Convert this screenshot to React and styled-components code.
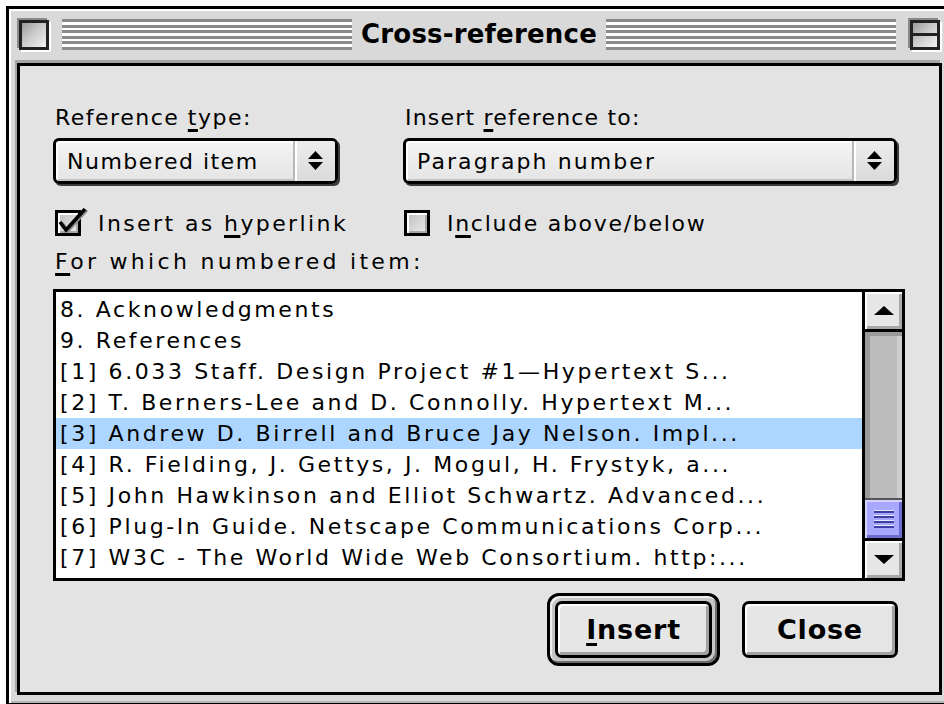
import React from "react";
import styled, { createGlobalStyle } from "styled-components";

const Global = createGlobalStyle`
  html, body { margin: 0; padding: 0; background: #fff; overflow: hidden; }
  body { font-family: "DejaVu Sans", Verdana, sans-serif; color: #000; }
  #root { width: 944px; height: 704px; overflow: hidden; }
`;

const Window = styled.div`
  box-sizing: border-box;
  margin: 6px 0 0 6px;
  width: 947px;
  height: 700px;
  border: 3px solid #000;
  background: #d9d9d9;
  box-shadow: inset 2px 2px 0 #fff, inset -2px -2px 0 #b4b4b4;
  padding: 0 8px 8px 8px;
  display: flex;
  flex-direction: column;
`;

const TitleBar = styled.div`
  height: 51px;
  display: flex;
  align-items: center;
  padding: 0 2px;
`;

const FrameBox = styled.div`
  position: relative;
  box-sizing: border-box;
  width: 30px;
  height: 30px;
  flex: none;
  border: 3px solid #222;
  background: linear-gradient(135deg, #9c9c9c 0%, #c9c9c9 45%, #f3f3f3 100%);
  box-shadow: -2px -2px 0 #8a8a8a, 2px 2px 0 #fff;
  display: flex;
  flex-direction: column;
  justify-content: center;
`;

const ShadeBar = styled.div`
  height: 3px;
  background: #222;
`;

const Stripes = styled.div`
  flex: 1;
  height: 31px;
  margin: ${(p) => (p.$side === "left" ? "0 0 0 13px" : "0 14px 0 0")};
  background: repeating-linear-gradient(
    to bottom,
    #8a8a8a 0 3px,
    #fff 3px 5.6px
  );
`;

const Title = styled.div`
  padding: 0 9px;
  font-weight: bold;
  font-size: 26px;
  letter-spacing: 0.2px;
  line-height: 31px;
  white-space: nowrap;
`;

const Body = styled.div`
  flex: 1;
  margin-top: 3px;
  border: 3px solid #000;
  box-shadow: -2px -3px 0 #a6a6a6;
  background: #e3e3e3;
  padding: 39px 34px 0 33px;
  display: flex;
  flex-direction: column;
`;

const Fields = styled.div`
  display: grid;
  grid-template-columns: 285px 494px;
  column-gap: 65px;
  align-items: center;
  margin-top: ${(p) => p.$top || 0}px;
`;

const Field = styled.div`
  display: flex;
  flex-direction: column;
`;

const Label = styled.div`
  font-size: 22px;
  line-height: 26px;
  letter-spacing: ${(p) => p.$spacing ?? 1.5}px;
  padding-left: 2px;
  white-space: nowrap;
  margin-top: ${(p) => p.$top || 0}px;
`;

const Key = styled.span`
  text-decoration: underline;
  text-decoration-thickness: 3px;
  text-underline-offset: 4px;
`;

const Popup = styled.div`
  box-sizing: border-box;
  margin-top: 7px;
  height: 46px;
  display: flex;
  border: 3px solid #000;
  border-radius: 6px;
  background: linear-gradient(#f4f4f4, #e4e4e4);
  box-shadow: 2px 2px 0 #3a3a3a, inset 2px 2px 0 #fff, inset -2px -2px 0 #c2c2c2;
  overflow: hidden;
`;

const PopupText = styled.div`
  flex: 1;
  padding-left: 11px;
  font-size: 22px;
  letter-spacing: ${(p) => p.$spacing ?? 1.5}px;
  line-height: 42px;
  white-space: nowrap;
`;

const PopupArrows = styled.div`
  width: 40px;
  flex: none;
  display: flex;
  align-items: center;
  justify-content: center;
  border-left: 2px solid #b8b8b8;
  box-shadow: inset 2px 0 0 #fff;
  background: linear-gradient(#ececec, #dadada);
`;

const CheckRow = styled.div`
  display: flex;
  align-items: center;
  height: 30px;
  padding-left: ${(p) => p.$indent}px;
`;

const CheckBox = styled.div`
  position: relative;
  box-sizing: border-box;
  width: 26px;
  height: 26px;
  flex: none;
  border: 3px solid #000;
  background: linear-gradient(135deg, #bcbcbc, #eeeeee);
  box-shadow: inset 2px 2px 0 #fff, inset -2px -2px 0 #a8a8a8;
`;

const CheckMark = styled.svg`
  position: absolute;
  left: -3px;
  top: -4px;
  overflow: visible;
`;

const CheckLabel = styled.span`
  margin-left: 17px;
  font-size: 22px;
  letter-spacing: ${(p) => p.$spacing ?? 1.5}px;
  white-space: nowrap;
`;

const ListBox = styled.div`
  box-sizing: border-box;
  margin-top: 14px;
  height: 292px;
  width: 852px;
  display: flex;
  border: 3px solid #000;
  background: #fff;
`;

const Rows = styled.div`
  flex: 1;
  padding-top: 2px;
  overflow: hidden;
`;

const Row = styled.div`
  height: 31px;
  line-height: 32px;
  padding-left: 4px;
  font-size: 22px;
  letter-spacing: 2.6px;
  white-space: nowrap;
  background: ${(p) => (p.$selected ? "#acd5ff" : "transparent")};
`;

const ScrollBar = styled.div`
  width: 37px;
  flex: none;
  border-left: 3px solid #000;
  display: flex;
  flex-direction: column;
`;

const ArrowButton = styled.div`
  height: 37px;
  flex: none;
  display: flex;
  align-items: center;
  justify-content: center;
  background: #e6e6e6;
  box-shadow: inset 2px 2px 0 #fff, inset -3px -3px 0 #a8a8a8;
  border-top: ${(p) => (p.$down ? "3px solid #000" : "none")};
  border-bottom: ${(p) => (p.$down ? "none" : "3px solid #000")};
`;

const Track = styled.div`
  flex: 1;
  background: #bcbcbc;
  box-shadow: inset 5px 4px 0 #9a9a9a, inset -5px 0 0 #cdcdcd;
`;

const Thumb = styled.div`
  height: 38px;
  flex: none;
  border-top: 2px solid #555;
  background: #a8a8ff;
  box-shadow: inset 2px 2px 0 #d4d4ff, inset -3px -3px 0 #6b6bd0;
  display: flex;
  flex-direction: column;
  justify-content: center;
  align-items: center;
  gap: 3px;
`;

const Grip = styled.div`
  width: 20px;
  height: 2px;
  background: #3f3fa8;
  box-shadow: 0 -1px 0 #e6e6ff;
`;

const Buttons = styled.div`
  margin-top: 12px;
  display: flex;
  justify-content: flex-end;
  align-items: center;
  gap: 22px;
  padding-right: 7px;
`;

const DefaultRing = styled.div`
  padding: 5px;
  border: 3px solid #000;
  border-radius: 12px;
  background: #c6c6c6;
  box-shadow: inset 2px 2px 0 #eeeeee, inset -2px -2px 0 #6e6e6e;
`;

const Button = styled.div`
  box-sizing: border-box;
  width: ${(p) => p.$w}px;
  height: 57px;
  border: 3px solid #000;
  border-radius: 7px;
  background: #e6e6e6;
  box-shadow: inset 2px 2px 0 #fff, inset -3px -3px 0 #a2a2a2;
  display: flex;
  align-items: center;
  justify-content: center;
  font-weight: bold;
  font-size: 27px;
  letter-spacing: 0.8px;
`;

const UpDown = () => (
  <svg width="15" height="20" viewBox="0 0 15 20">
    <polygon points="7.5,0 15,8 0,8" fill="#000" />
    <polygon points="0,11 15,11 7.5,19" fill="#000" />
  </svg>
);

const Triangle = ({ down }) => (
  <svg width="20" height="9" viewBox="0 0 20 9">
    <polygon points={down ? "0,0 20,0 10,9" : "10,0 20,9 0,9"} fill="#000" />
  </svg>
);

const items = [
  "8. Acknowledgments",
  "9. References",
  "[1] 6.033 Staff. Design Project #1\u2014Hypertext S...",
  "[2] T. Berners-Lee and D. Connolly. Hypertext M...",
  "[3] Andrew D. Birrell and Bruce Jay Nelson. Impl...",
  "[4] R. Fielding, J. Gettys, J. Mogul, H. Frystyk, a...",
  "[5] John Hawkinson and Elliot Schwartz. Advanced...",
  "[6] Plug-In Guide. Netscape Communications Corp...",
  "[7] W3C - The World Wide Web Consortium. http:...",
];

export default function App() {
  return (
    <>
      <Global />
      <Window>
        <TitleBar>
          <FrameBox />
          <Stripes $side="left" />
          <Title>Cross-reference</Title>
          <Stripes $side="right" />
          <FrameBox>
            <ShadeBar />
          </FrameBox>
        </TitleBar>
        <Body>
          <Fields>
            <Field>
              <Label>
                Reference <Key>t</Key>ype:
              </Label>
              <Popup>
                <PopupText>Numbered item</PopupText>
                <PopupArrows>
                  <UpDown />
                </PopupArrows>
              </Popup>
            </Field>
            <Field>
              <Label $spacing={1.2}>
                Insert <Key>r</Key>eference to:
              </Label>
              <Popup>
                <PopupText $spacing={2.1}>Paragraph number</PopupText>
                <PopupArrows>
                  <UpDown />
                </PopupArrows>
              </Popup>
            </Field>
          </Fields>
          <Fields $top={24}>
            <CheckRow $indent={2}>
              <CheckBox>
                <CheckMark width="36" height="30" viewBox="0 0 36 30">
                  <polyline
                    points="7,14 13,22 32,1"
                    fill="none"
                    stroke="#8a8a8a"
                    strokeWidth="3"
                  />
                  <polyline
                    points="5,13 11,21 30,0"
                    fill="none"
                    stroke="#000"
                    strokeWidth="3.5"
                  />
                </CheckMark>
              </CheckBox>
              <CheckLabel $spacing={2.4}>
                Insert as <Key>h</Key>yperlink
              </CheckLabel>
            </CheckRow>
            <CheckRow $indent={1}>
              <CheckBox />
              <CheckLabel $spacing={1.7}>
                I<Key>n</Key>clude above/below
              </CheckLabel>
            </CheckRow>
          </Fields>
          <Label $top={11} $spacing={3.3}>
            <Key>F</Key>or which numbered item:
          </Label>
          <ListBox>
            <Rows>
              {items.map((t, i) => (
                <Row key={i} $selected={i === 4}>
                  {t}
                </Row>
              ))}
            </Rows>
            <ScrollBar>
              <ArrowButton>
                <Triangle />
              </ArrowButton>
              <Track />
              <Thumb>
                <Grip />
                <Grip />
                <Grip />
                <Grip />
              </Thumb>
              <ArrowButton $down>
                <Triangle down />
              </ArrowButton>
            </ScrollBar>
          </ListBox>
          <Buttons>
            <DefaultRing>
              <Button $w={157}>
                <Key>I</Key>nsert
              </Button>
            </DefaultRing>
            <Button $w={156}>Close</Button>
          </Buttons>
        </Body>
      </Window>
    </>
  );
}
